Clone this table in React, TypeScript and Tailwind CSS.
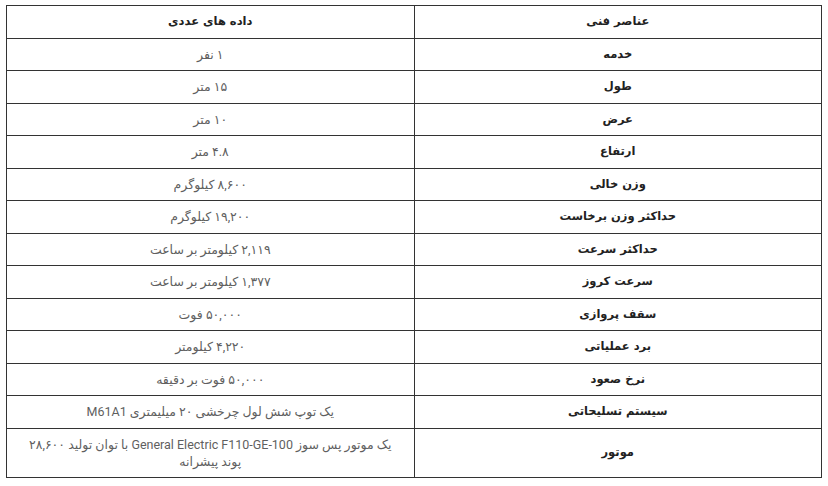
const rows: [string, string][] = [
  ["خدمه", "۱ نفر"],
  ["طول", "۱۵ متر"],
  ["عرض", "۱۰ متر"],
  ["ارتفاع", "۴.۸ متر"],
  ["وزن خالی", "۸,۶۰۰ کیلوگرم"],
  ["حداکثر وزن برخاست", "۱۹,۲۰۰ کیلوگرم"],
  ["حداکثر سرعت", "۲,۱۱۹ کیلومتر بر ساعت"],
  ["سرعت کروز", "۱,۳۷۷ کیلومتر بر ساعت"],
  ["سقف پروازی", "۵۰,۰۰۰ فوت"],
  ["برد عملیاتی", "۴,۲۲۰ کیلومتر"],
  ["نرخ صعود", "۵۰,۰۰۰ فوت بر دقیقه"],
  ["سیستم تسلیحاتی", "یک توپ شش لول چرخشی ۲۰ میلیمتری M61A1"],
  ["موتور", "یک موتور پس سوز General Electric F110-GE-100 با توان تولید ۲۸,۶۰۰ پوند پیشرانه"],
];

// labels column is bold and dark, values are lighter gray
const labelCls =
  "h-[32.5px] border border-[#333] font-bold text-[11.5px] text-[#222] text-center px-2 py-0 font-['DejaVu_Sans',sans-serif]";
const valueCls =
  "h-[32.5px] border border-[#333] text-[12.5px] text-[#5f5f5f] text-center px-[14px] py-[7px] font-['Roboto','DejaVu_Sans',sans-serif]";

export default function App() {
  return (
    <div className="bg-white w-[828px] h-[486px] pt-[5px] px-[6px]">
      <table dir="rtl" className="w-[816px] border-collapse table-fixed leading-[17px]">
        <thead>
          <tr>
            <th className={`w-1/2 ${labelCls}`}>عناصر فنی</th>
            <th className={`w-1/2 ${labelCls}`}>داده های عددی</th>
          </tr>
        </thead>
        <tbody>
          {rows.map(([label, value]) => (
            <tr key={label}>
              <td className={labelCls}>{label}</td>
              <td className={valueCls}>{value}</td>
            </tr>
          ))}
        </tbody>
      </table>
    </div>
  );
}
